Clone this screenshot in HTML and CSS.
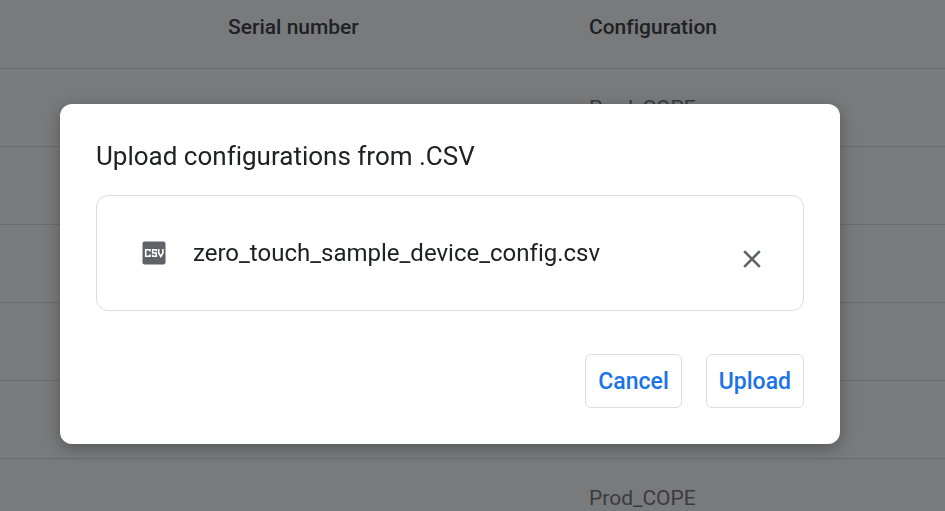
FILE: index.html
```
<!DOCTYPE html>
<html lang="en">
<head>
  <meta charset="UTF-8">
  <title>Upload configurations</title>
  <link rel="stylesheet" href="styles.css">
</head>
<body>
  <table class="devices">
    <colgroup>
      <col class="col-select">
      <col class="col-serial">
      <col>
    </colgroup>
    <thead>
      <tr><th></th><th>Serial number</th><th>Configuration</th></tr>
    </thead>
    <tbody>
      <tr><td></td><td></td><td>Prod_COPE</td></tr>
      <tr><td></td><td></td><td></td></tr>
      <tr><td></td><td></td><td></td></tr>
      <tr><td></td><td></td><td></td></tr>
      <tr><td></td><td></td><td></td></tr>
      <tr><td></td><td></td><td>Prod_COPE</td></tr>
    </tbody>
  </table>

  <div class="overlay">
    <div class="dialog" role="dialog" aria-modal="true" aria-labelledby="dialog-title">
      <h1 id="dialog-title">Upload configurations from .CSV</h1>

      <div class="file">
        <svg class="file-icon" viewBox="0 0 24 24" aria-hidden="true">
          <rect x="0.500" y="0.500" width="23" height="23" rx="2" fill="#5f6368"/>
          <g fill="none" stroke="#fff" stroke-width="1.600">
            <path d="M8 10.500V8.700H3.700v6.600H8v-1.800"/>
            <path d="M14.300 10.300V8.700h-3.600V12h3.600v3.300h-3.600v-1.600"/>
            <path d="M16.700 8v4l2.100 3.500L20.900 12V8"/>
          </g>
        </svg>
        <span class="file-name">zero_touch_sample_device_config.csv</span>
        <button class="remove" type="button" aria-label="Remove file">
          <svg viewBox="0 0 18 18" aria-hidden="true">
            <path d="M1.200 1.200l15.600 15.600M16.800 1.200L1.200 16.800" stroke="#5f6368" stroke-width="2.600"/>
          </svg>
        </button>
      </div>

      <div class="actions">
        <button class="btn" type="button">Cancel</button>
        <button class="btn" type="button">Upload</button>
      </div>
    </div>
  </div>
</body>
</html>
```
FILE: styles.css
```
* {
  box-sizing: border-box;
}
body {
  margin: 0;
  height: 100vh;
  overflow: hidden;
  background: #fff;
  font-family: Roboto, sans-serif;
  font-variant-ligatures: none;
  color: #202124;
}
.devices {
  width: 100%;
  table-layout: fixed;
  border-collapse: collapse;
  font-size: 21px;
  line-height: 28px;
}
.col-select {
  width: 228px;
}
.col-serial {
  width: 361px;
}
.devices th {
  padding: 13px 0 27px;
  border-bottom: 1px solid #dadce0;
  font-weight: 500;
  text-align: left;
}
.devices td {
  height: 78px;
  padding: 0;
  border-bottom: 1px solid #dadce0;
  color: #5f6368;
}
.overlay {
  position: fixed;
  inset: 0;
  padding: 104px 60px;
  background: rgba(32, 33, 36, 0.6);
}
.dialog {
  width: 100%;
  max-width: 780px;
  padding: 36px;
  background: #fff;
  border-radius: 12px;
  box-shadow: 0 4px 16px rgba(0, 0, 0, 0.3);
}
h1 {
  margin: 0 0 23px;
  font-size: 26px;
  font-weight: 400;
  line-height: 32px;
}
.file {
  display: flex;
  align-items: center;
  padding: 31px 31px 31px 45px;
  border: 1px solid #dadce0;
  border-radius: 12px;
}
.file-icon {
  width: 24px;
  height: 24px;
}
.file-name {
  flex: 1;
  margin-left: 27px;
  font-size: 24px;
  line-height: 52px;
}
.remove {
  display: flex;
  align-items: center;
  justify-content: center;
  align-self: flex-end;
  width: 40px;
  height: 40px;
  padding: 0;
  border: none;
  background: none;
  cursor: pointer;
}
.remove svg {
  width: 18px;
  height: 18px;
}
.actions {
  display: flex;
  justify-content: flex-end;
  gap: 24px;
  margin-top: 43px;
}
.btn {
  height: 54px;
  padding: 0 12px;
  border: 1px solid #dadce0;
  border-radius: 6px;
  background: #fff;
  color: #1a73e8;
  font-family: inherit;
  font-size: 23px;
  font-weight: 500;
  cursor: pointer;
}
.btn:hover {
  background: #f6fafe;
}
```
